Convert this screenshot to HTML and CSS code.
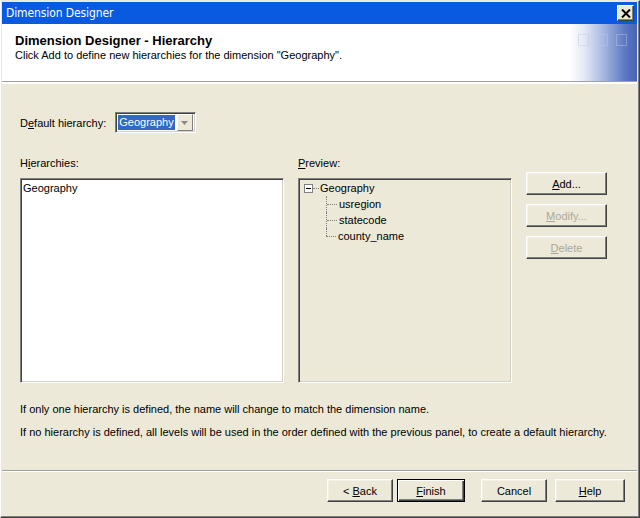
FILE: index.html
```html
<!DOCTYPE html>
<html>
<head>
<meta charset="utf-8">
<link rel="stylesheet" href="styles.css">
</head>
<body>
<div class="window">
  <div class="titlebar">
    <span class="title">Dimension Designer</span>
    <span class="close">
      <svg width="10" height="9" viewBox="0 0 10 9"><path d="M1 0.5 L9 8.5 M9 0.5 L1 8.5" stroke="#000" stroke-width="2"/></svg>
    </span>
  </div>
  <div class="header">
    <div class="header-text">
      <div class="h-title">Dimension Designer - Hierarchy</div>
      <div class="h-sub">Click Add to define new hierarchies for the dimension "Geography".</div>
    </div>
    <div class="header-art">
      <span class="sq"></span><span class="sq"></span><span class="sq"></span>
    </div>
  </div>
  <div class="body">
    <div class="default-row">
      <span class="label">D<u>e</u>fault hierarchy:</span>
      <div class="combo">
        <span class="combo-value">Geography</span>
        <span class="combo-btn"><svg width="7" height="4" viewBox="0 0 7 4"><path d="M0 0 H7 L3.5 4 Z" fill="#8a8a8a"/></svg></span>
      </div>
    </div>
    <div class="panels">
      <div class="col-list">
        <div class="label">H<u>i</u>erarchies:</div>
        <div class="listbox">
          <div class="item">Geography</div>
        </div>
      </div>
      <div class="col-preview">
        <div class="label"><u>P</u>review:</div>
        <div class="preview">
          <div class="tree-root">
            <span class="minus"></span><span class="hdots"></span><span class="node">Geography</span>
          </div>
          <div class="tree-children">
            <div class="child"><span class="cdots"></span><span class="node">usregion</span></div>
            <div class="child"><span class="cdots"></span><span class="node">statecode</span></div>
            <div class="child last"><span class="cdots"></span><span class="node">county_name</span></div>
          </div>
        </div>
      </div>
      <div class="col-buttons">
        <button class="btn"><u>A</u>dd...</button>
        <button class="btn disabled"><u>M</u>odify...</button>
        <button class="btn disabled"><u>D</u>elete</button>
      </div>
    </div>
    <p class="note">If only one hierarchy is defined, the name will change to match the dimension name.</p>
    <p class="note">If no hierarchy is defined, all levels will be used in the order defined with the previous panel, to create a default hierarchy.</p>
  </div>
  <div class="footer">
    <button class="btn fbtn back">&lt; <u>B</u>ack</button>
    <button class="btn fbtn default"><u>F</u>inish</button>
    <button class="btn fbtn cancel">Cancel</button>
    <button class="btn fbtn help"><u>H</u>elp</button>
  </div>
</div>
</body>
</html>
```
FILE: styles.css
```css
* { box-sizing: border-box; }
html, body { margin: 0; padding: 0; }
body {
  width: 640px;
  height: 518px;
  overflow: hidden;
  font-family: "Liberation Sans", Arial, sans-serif;
  font-size: 11px;
  color: #000;
  background: #ece9d8;
}
.window {
  width: 640px;
  height: 518px;
  background: #ece9d8;
  border-top: 1px solid #ece9d8;
  border-left: 1px solid #ffffff;
  border-right: 1px solid #404040;
  border-bottom: 1px solid #404040;
  padding: 1px 2px 3px 1px;
  display: flex;
  flex-direction: column;
  box-shadow: inset -1px -1px 0 #808080;
}
.titlebar {
  height: 22px;
  background: #0a5ae0;
  color: #fff;
  display: flex;
  align-items: center;
  justify-content: space-between;
  padding: 0 3px 0 4px;
}
.title { font-size: 12px; font-family: "DejaVu Sans Condensed", "DejaVu Sans", sans-serif; letter-spacing: -0.1px; }
.close {
  width: 17px;
  height: 16px;
  background: #ece9d8;
  border: 1px solid;
  border-color: #fff #404040 #404040 #fff;
  box-shadow: inset -1px -1px 0 #808080;
  display: flex;
  align-items: center;
  justify-content: center;
}
.header {
  height: 58px;
  background: #fff;
  border-bottom: 1px solid #a0a0a0;
  box-shadow: 0 1px 0 #fff;
  display: flex;
  justify-content: space-between;
}
.header-text { padding: 9px 0 0 13px; }
.h-title { font-weight: bold; font-size: 13px; line-height: 15px; }
.h-sub { margin-top: 1px; line-height: 13px; }
.header-art {
  width: 68px;
  background: linear-gradient(to right, #ffffff 0%, #e4e9f5 22%, #a3b4de 52%, #5c79c5 82%, #4563b3 100%);
  display: flex;
  align-items: flex-start;
  gap: 8px;
  padding: 10px 0 0 9px;
}
.sq {
  width: 11px;
  height: 12px;
  border: 1px solid rgba(190, 200, 225, 0.45);
}
.body {
  flex: 1;
  padding: 28px 0 0 18px;
  border-top: 1px solid #fff;
  margin-top: 1px;
}
.default-row {
  display: flex;
  align-items: center;
  gap: 9px;
  height: 21px;
}
.combo {
  width: 81px;
  height: 21px;
  background: #fff;
  border: 1px solid;
  border-color: #808080 #fff #fff #808080;
  box-shadow: inset 1px 1px 0 #404040, inset -1px -1px 0 #d4d0c8;
  display: flex;
  align-items: center;
  padding: 2px;
}
.combo-value {
  background: #316ac5;
  color: #fff;
  height: 15px;
  line-height: 15px;
  padding: 0 1px;
  flex: 1;
}
.combo-btn {
  width: 17px;
  height: 17px;
  margin-left: 2px;
  background: #ece9d8;
  border: 1px solid;
  border-color: #fff #808080 #808080 #fff;
  display: flex;
  align-items: center;
  justify-content: center;
}
.panels {
  display: grid;
  grid-template-columns: 264px 214px 81px;
  column-gap: 14px;
  margin-top: 23px;
}
.label { line-height: 14px; }
.listbox, .preview {
  margin-top: 8px;
  height: 205px;
  border: 1px solid;
  border-color: #808080 #fff #fff #808080;
  box-shadow: inset 1px 1px 0 #404040, inset -1px -1px 0 #d4d0c8;
}
.listbox { background: #fff; padding: 2px 2px; }
.item { line-height: 14px; }
.preview { background: #ece9d8; padding: 1px 5px; }
.tree-root { display: flex; align-items: center; height: 16px; }
.minus {
  width: 9px; height: 9px;
  border: 1px solid #808080;
  background: #fff;
  position: relative;
}
.minus::after {
  content: "";
  position: absolute;
  left: 1px; top: 3px;
  width: 5px; height: 1px;
  background: #000;
}
.hdots {
  width: 6px;
  border-top: 1px dotted #808080;
  margin: 0 1px 0 0;
}
.tree-children { margin-left: 22px; }
.child {
  display: flex;
  align-items: center;
  height: 16px;
  position: relative;
  border-left: 1px dotted #808080;
}
.child.last { border-left: none; }
.child.last::before {
  content: "";
  position: absolute;
  left: 0; top: 0;
  height: 8px;
  border-left: 1px dotted #808080;
}
.cdots {
  width: 10px;
  border-top: 1px dotted #808080;
  margin-right: 2px;
}
.col-buttons {
  display: flex;
  flex-direction: column;
  gap: 9px;
  margin-top: 16px;
}
.btn {
  font-family: "Liberation Sans", Arial, sans-serif;
  font-size: 11px;
  color: #000;
  background: #ece9d8;
  height: 23px;
  width: 81px;
  border: 1px solid;
  border-color: #fff #404040 #404040 #fff;
  box-shadow: inset -1px -1px 0 #808080, inset 1px 1px 0 #f4f2e8;
  padding: 0;
}
.btn.disabled { color: #aca899; }
.note { margin: 0; line-height: 14px; }
.body > .note:first-of-type { margin-top: 19px; }
.note + .note { margin-top: 9px; }
.footer {
  height: 44px;
  border-top: 1px solid #a0a0a0;
  box-shadow: inset 0 1px 0 #fff;
  display: flex;
  align-items: flex-start;
  justify-content: flex-end;
  padding: 8px 12px 0 0;
  gap: 4px;
}
.fbtn.back { width: 66px; }
.fbtn.default {
  width: 68px;
  border-color: #000;
  box-shadow: inset 1px 1px 0 #fff, inset -1px -1px 0 #404040, inset -2px -2px 0 #808080;
}
.fbtn.cancel { width: 66px; margin-left: 12px; margin-right: 4px; }
.fbtn.help { width: 70px; }
u { text-decoration: underline; text-underline-offset: 1px; }
```
